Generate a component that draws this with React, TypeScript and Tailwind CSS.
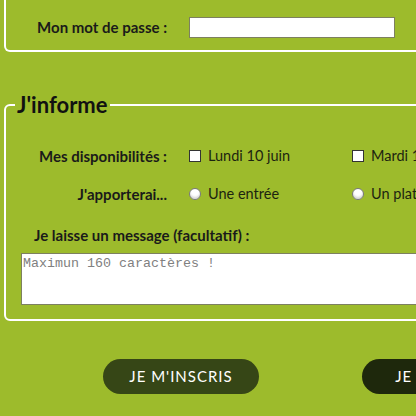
import React from 'react';

const Checkbox = () => (
  <span className="inline-block w-[12px] h-[12px] bg-white border border-[#333] shrink-0" />
);

const Radio = () => (
  <span className="inline-block w-[12px] h-[12px] rounded-full bg-white border border-[#777] shadow-[inset_0_-2px_2px_rgba(0,0,0,0.15)] shrink-0" />
);

export default function App() {
  return (
    <div className="w-[416px] h-[416px] overflow-hidden bg-[#9dbb2c] text-[#1c2410]" style={{ fontFamily: 'Lato, "Open Sans", sans-serif' }}>
      {/* Login block, top part scrolled out */}
      <div className="ml-[4px] w-[640px] h-[52px] border-2 border-t-0 border-white rounded-b-[6px] pt-[16px]">
        <div className="flex items-center">
          <label className="w-[161px] text-right font-bold text-[15px] text-[#1a1a1a]">Mon mot de passe :</label>
          <input type="text" className="ml-[22px] w-[206px] h-[21px] bg-white border border-[#7d8060] outline-none" />
        </div>
      </div>

      {/* J'informe */}
      <fieldset className="ml-[4px] mt-[41px] w-[640px] h-[228px] border-2 border-white rounded-[6px] px-0">
        <legend className="ml-[9px] px-[2px] text-[22px] font-bold leading-[24px] text-[#111]">J'informe</legend>

        <div className="flex items-center mt-[29px] h-[20px]">
          <span className="w-[161px] text-right font-bold text-[15px] text-[#1a1a1a]">Mes disponibilités :</span>
          <div className="ml-[22px] w-[163px] flex items-center gap-[7px]">
            <Checkbox />
            <span className="text-[14.5px]">Lundi 10 juin</span>
          </div>
          <div className="flex items-center gap-[7px]">
            <Checkbox />
            <span className="text-[14.5px]">Mardi 11 juin</span>
          </div>
        </div>

        <div className="flex items-center mt-[18px] h-[20px]">
          <span className="w-[161px] text-right font-bold text-[15px] text-[#1a1a1a]">J'apporterai...</span>
          <div className="ml-[22px] w-[163px] flex items-center gap-[7px]">
            <Radio />
            <span className="text-[14.5px]">Une entrée</span>
          </div>
          <div className="flex items-center gap-[7px]">
            <Radio />
            <span className="text-[14.5px]">Un plat</span>
          </div>
        </div>

        <div className="mt-[20px] ml-[28px] h-[20px] font-bold text-[15px] text-[#1a1a1a]">Je laisse un message (facultatif) :</div>

        <textarea
          className="block mt-[9px] ml-[15px] w-[600px] h-[52px] bg-white border border-[#7d8060] resize-none outline-none px-[1px] py-0 text-[13.33px] placeholder:text-[#808080]"
          style={{ fontFamily: '"Liberation Mono", monospace' }}
          placeholder="Maximun 160 caractères !"
        />
      </fieldset>

      {/* Buttons */}
      <div className="flex mt-[38px] ml-[103px] gap-[103px]">
        <button className="w-[156px] h-[35px] rounded-full bg-[#364616] text-white text-[15px] tracking-[1px] shrink-0">JE M'INSCRIS</button>
        <button className="w-[156px] h-[35px] rounded-full bg-[#1e280c] text-white text-[15px] tracking-[1px] shrink-0">JE REVIENS</button>
      </div>
    </div>
  );
}
